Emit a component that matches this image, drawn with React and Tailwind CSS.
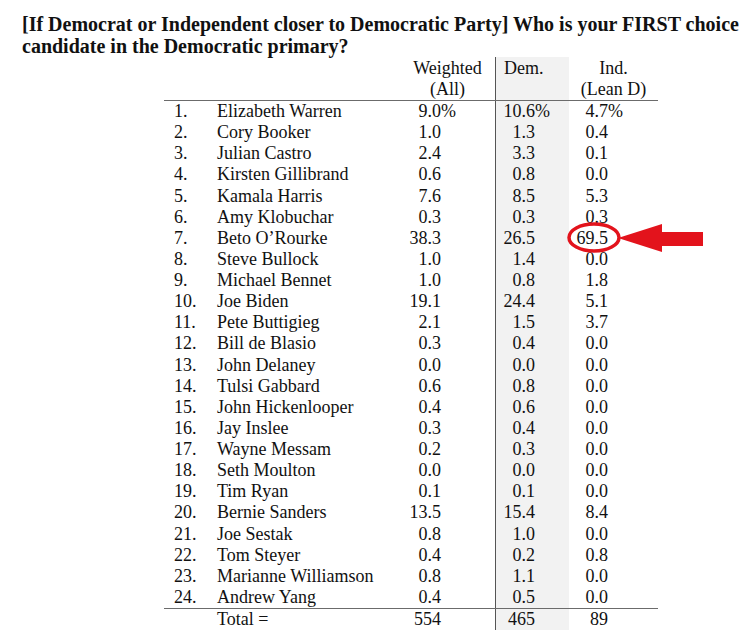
import React from 'react'

const ROWS = [
  ['1.', 'Elizabeth Warren', '9.0', '10.6', '4.7', true],
  ['2.', 'Cory Booker', '1.0', '1.3', '0.4'],
  ['3.', 'Julian Castro', '2.4', '3.3', '0.1'],
  ['4.', 'Kirsten Gillibrand', '0.6', '0.8', '0.0'],
  ['5.', 'Kamala Harris', '7.6', '8.5', '5.3'],
  ['6.', 'Amy Klobuchar', '0.3', '0.3', '0.3'],
  ['7.', 'Beto O\u2019Rourke', '38.3', '26.5', '69.5'],
  ['8.', 'Steve Bullock', '1.0', '1.4', '0.0'],
  ['9.', 'Michael Bennet', '1.0', '0.8', '1.8'],
  ['10.', 'Joe Biden', '19.1', '24.4', '5.1'],
  ['11.', 'Pete Buttigieg', '2.1', '1.5', '3.7'],
  ['12.', 'Bill de Blasio', '0.3', '0.4', '0.0'],
  ['13.', 'John Delaney', '0.0', '0.0', '0.0'],
  ['14.', 'Tulsi Gabbard', '0.6', '0.8', '0.0'],
  ['15.', 'John Hickenlooper', '0.4', '0.6', '0.0'],
  ['16.', 'Jay Inslee', '0.3', '0.4', '0.0'],
  ['17.', 'Wayne Messam', '0.2', '0.3', '0.0'],
  ['18.', 'Seth Moulton', '0.0', '0.0', '0.0'],
  ['19.', 'Tim Ryan', '0.1', '0.1', '0.0'],
  ['20.', 'Bernie Sanders', '13.5', '15.4', '8.4'],
  ['21.', 'Joe Sestak', '0.8', '1.0', '0.0'],
  ['22.', 'Tom Steyer', '0.4', '0.2', '0.8'],
  ['23.', 'Marianne Williamson', '0.8', '1.1', '0.0'],
  ['24.', 'Andrew Yang', '0.4', '0.5', '0.0'],
]

const GRID = 'grid grid-cols-[53px_183px_95px_74px_89px]'

function Pct({ on }) {
  if (!on) return null
  return <span className="-mr-[15px]">%</span>
}

export default function App() {
  return (
    <div className="relative w-[754px] h-[639px] overflow-hidden bg-white font-['Liberation_Serif',serif] text-[#111]">
      <h1 className="pt-[13px] pl-[22px] text-[20px] font-bold leading-[22px] whitespace-nowrap">
        [If Democrat or Independent closer to Democratic Party] Who is your FIRST choice
        <br />
        candidate in the Democratic primary?
      </h1>

      <div className="ml-[164px] w-[494px] text-[18px] leading-[21px]">
        <div className={GRID}>
          <div />
          <div />
          <div className="pt-[1px] text-center">
            Weighted
            <br />
            (All)
          </div>
          <div className="pt-[1px] pl-[8px] bg-[#f2f2f2] border-l border-[#555]">Dem.</div>
          <div className="pt-[1px] text-center">
            Ind.
            <br />
            (Lean D)
          </div>
        </div>

        <div className="border-t border-[#6b6b6b] leading-[21.13px]">
          {ROWS.map(([n, name, w, d, i, pct]) => (
            <div key={n} className={GRID}>
              <div className="pl-[10px]">{n}</div>
              <div>{name}</div>
              <div className="text-right pr-[54px]">
                {w}
                <Pct on={pct} />
              </div>
              <div className="text-right pr-[34px] bg-[#f2f2f2] border-l border-[#555]">
                {d}
                <Pct on={pct} />
              </div>
              <div className="text-right pr-[50px]">
                {i}
                <Pct on={pct} />
              </div>
            </div>
          ))}
        </div>

        <div className={`${GRID} border-t border-[#6b6b6b]`}>
          <div />
          <div>Total =</div>
          <div className="text-right pr-[54px]">554</div>
          <div className="text-right pr-[34px] bg-[#f2f2f2] border-l border-[#555]">465</div>
          <div className="text-right pr-[50px]">89</div>
        </div>
      </div>

      <svg className="absolute inset-0 pointer-events-none" width="754" height="639" viewBox="0 0 754 639">
        <ellipse cx="594" cy="237.5" rx="25" ry="13.5" fill="none" stroke="#e3131c" strokeWidth="3.5" />
        <polygon
          points="618,238 662,224 662,232 703,232 703,246 662,246 662,252"
          fill="#e3131c"
        />
      </svg>
    </div>
  )
}
